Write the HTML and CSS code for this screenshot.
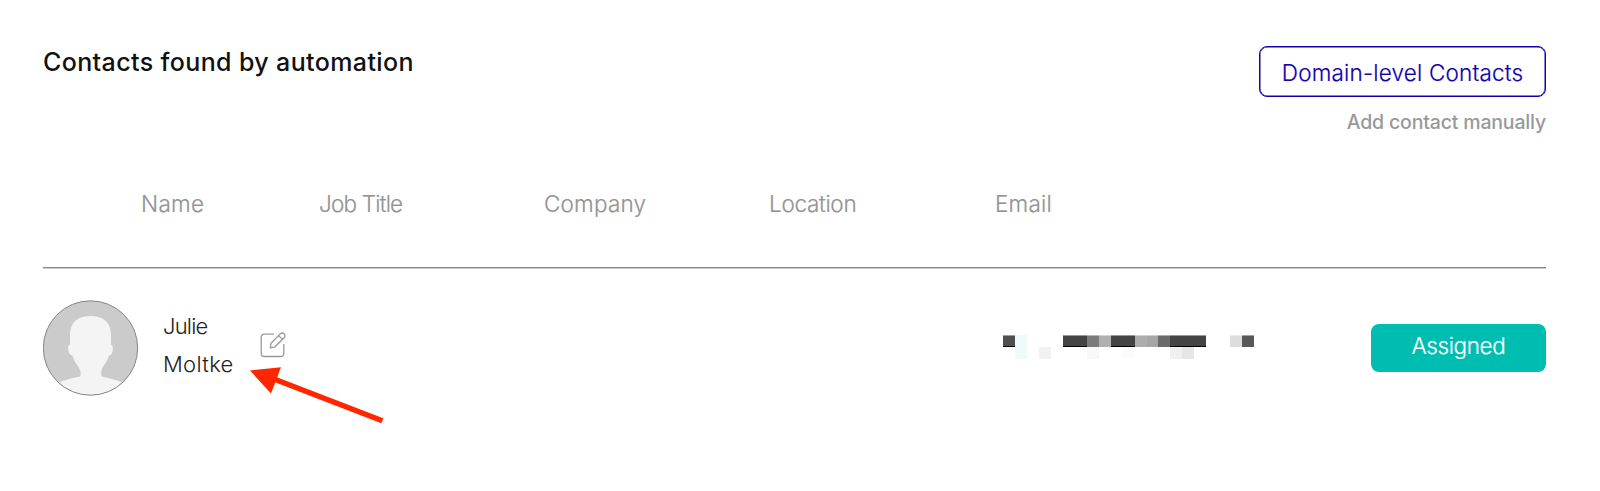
FILE: index.html
```html
<!DOCTYPE html>
<html lang="en">
<head>
<meta charset="utf-8">
<title>Contacts</title>
<link rel="stylesheet" href="styles.css">
</head>
<body>
<main class="panel">
  <header class="top">
    <h1 class="title"><span>Contacts found by automation</span></h1>
    <div class="actions">
      <button class="btn-outline"><span>Domain-level Contacts</span></button>
      <a class="add-link"><span>Add contact manually</span></a>
    </div>
  </header>
  <div class="row head">
    <span class="c-name">Name</span>
    <span class="c-job">Job Title</span>
    <span class="c-company">Company</span>
    <span class="c-location">Location</span>
    <span class="c-email">Email</span>
  </div>
  <div class="row person">
    <div class="who">
      <svg class="avatar" viewBox="0 0 96 96">
        <defs><clipPath id="disc"><circle cx="47.500" cy="48" r="47"/></clipPath></defs>
        <circle cx="47.500" cy="48" r="47.200" fill="#cbcbcb"/>
        <path clip-path="url(#disc)" fill="#f4f4f4" d="M27 35C27 22 35 16 47.500 16S68 22 68 35V44.500C71 45 70.500 55 66 55.500C64 62 60 66 58.500 70C58 74 58 75 59 76.500C66 78 74 80 81 83V98H14V83C21 80 29 78 37 76.500C38 75 38 74 37 70C35.500 66 31 62 29.500 55.500C24.500 55 24 45 27 44.500Z"/>
        <circle cx="47.500" cy="48" r="47.200" fill="none" stroke="#858585" stroke-width="1"/>
      </svg>
      <div class="name"><span class="first">Julie</span><br><span class="last">Moltke</span></div>
      <svg class="edit" viewBox="0 0 26 26" fill="none" stroke="#999" stroke-width="1.300" stroke-linejoin="round">
        <path d="M14 2.200H4.500Q1.200 2.200 1.200 5.500V21.200Q1.200 24.500 4.500 24.500H20.500Q23.800 24.500 23.800 21.200V12"/>
        <path d="M11 11.200L20.300 1.900Q22.400 .200 24.200 1.900Q25.900 3.800 24.100 5.700L15 14.800L10.300 15.900ZM18.600 3.600L22.400 7.400"/>
      </svg>
    </div>
    <svg class="masked" viewBox="0 0 252 24" shape-rendering="crispEdges">
      <path fill="#505050" d="M0 0h12v12H0z"/>
      <path fill="#f0faf8" d="M12 0h12v24H12z"/>
      <path fill="#f1f1f1" d="M36 12h12v12H36z"/>
      <path fill="#444" d="M60 0h24v12H60zM108 0h24v12h-24zM168 0h35v12h-35z"/>
      <path fill="#7b7b7b" d="M84 0h12v12H84z"/>
      <path fill="#b0b0b0" d="M96 0h12v12H96z"/>
      <path fill="#adadad" d="M132 0h12v12h-12z"/>
      <path fill="#a6a6a6" d="M144 0h12v12h-12z"/>
      <path fill="#6a6a6a" d="M155 0h12v12h-12z"/>
      <path fill="#444" d="M167 0h2v12h-2z"/>
      <path fill="#ddd" d="M227 0h12v12h-12z"/>
      <path fill="#585858" d="M239 0h12v12h-12z"/>
      <path fill="#f8f8f8" d="M84 12h12v12H84z"/>
      <path fill="#fcfcfc" d="M119 12h12v12h-12z"/>
      <path fill="#f0f0f0" d="M167 12h12v12h-12z"/>
      <path fill="#e6e6e6" d="M179 12h12v12h-12z"/>
      <path fill="#000" d="M0 11h12v1H0zM60 11h24v1H60zM108 11h24v1h-24zM167 11h36v1h-36z"/>
      <path fill="#fff" fill-opacity=".45" d="M0 0h12v1H0zM60 0h143v1H60zM227 0h24v1h-24z"/>
    </svg>
    <button class="assigned"><span>Assigned</span></button>
  </div>
  <svg class="arrow" viewBox="0 0 140 60">
    <path d="M24 12L132.300 53.800" stroke="#ff2600" stroke-width="5.400" fill="none"/>
    <path d="M0 3.500L31 .200L21 26.500Z" fill="#ff2600"/>
  </svg>
</main>
</body>
</html>
```
FILE: styles.css
```css
* { box-sizing: border-box; }
body { margin: 0; background: #fff; font-family: Inter, "Liberation Sans", sans-serif; }
button { font: inherit; background: none; margin: 0; padding: 0; }
.panel { position: relative; width: 1600px; height: 491px; padding: 46px 54px 0 43px; }
.top { display: flex; justify-content: space-between; height: 122px; }
.title { margin: 0; font-size: 25px; line-height: 33px; font-weight: 450; color: #111; letter-spacing: .38px; white-space: nowrap; }
.actions { display: flex; flex-direction: column; align-items: flex-end; }
.btn-outline { width: 287px; height: 51px; border: 1px solid #1000b2; box-shadow: inset 0 0 0 .5px #1000b2; border-radius: 8px; color: #1000b2; font-size: 22.500px; font-weight: 330; letter-spacing: .18px; line-height: 30px; padding-top: 3px; white-space: nowrap; -webkit-text-stroke: .2px; }
.add-link { margin-top: 12px; font-size: 19.500px; line-height: 26px; font-weight: 480; letter-spacing: -.17px; color: #999; white-space: nowrap; }
.row { display: grid; grid-template-columns: 276px 225px 225px 225px 1fr; }
.head { height: 100px; padding-top: 20px; line-height: 31px; font-size: 22.500px; font-weight: 340; color: #939393; border-bottom: 1px solid #888; box-shadow: 0 1px #ccc; -webkit-text-stroke: .2px; }
.c-name { padding-left: 98px; letter-spacing: .3px; }
.c-job { letter-spacing: -.8px; }
.c-company { letter-spacing: .2px; }
.c-location { letter-spacing: -.3px; }
.c-email { padding-left: 1px; letter-spacing: .2px; }
.person { grid-template-columns: 960px 1fr 175px; height: 158px; align-items: start; }
.who { display: flex; padding-top: 32px; }
.avatar { width: 96px; height: 96px; flex: none; }
.name { width: 97px; margin-left: 24px; padding-top: 7px; font-size: 22px; line-height: 38px; font-weight: 320; color: #222; }
.first { letter-spacing: -.8px; }
.last { letter-spacing: .3px; }
.edit { width: 26px; height: 26px; margin-top: 32px; }
.masked { width: 252px; height: 24px; margin-top: 67px; }
.assigned { width: 175px; height: 48px; margin-top: 56px; border: 0; border-radius: 8px; background: #00bdb2; color: #fff; font-size: 22.500px; line-height: 30px; font-weight: 340; letter-spacing: -.4px; padding-bottom: 4px; -webkit-text-stroke: .2px; }
.arrow { position: absolute; left: 250px; top: 367px; width: 140px; height: 60px; }
```
